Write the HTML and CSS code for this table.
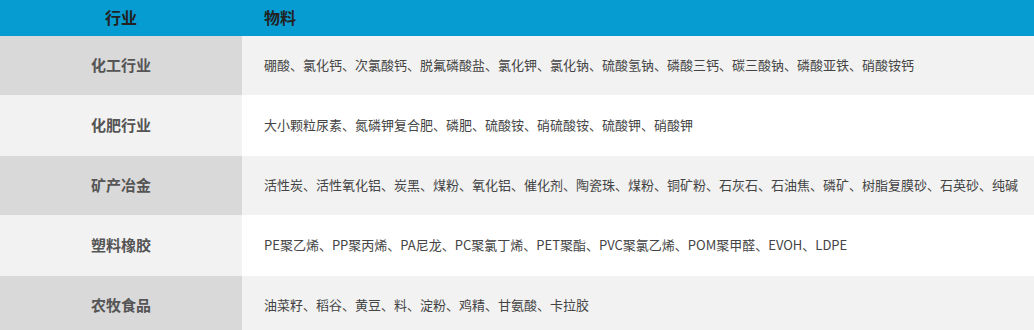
FILE: index.html
```html
<!DOCTYPE html>
<html lang="zh">
<head>
<meta charset="utf-8">
<link rel="stylesheet" href="styles.css">
</head>
<body>
<table class="tbl">
  <thead>
    <tr><th class="c1">行业</th><th class="c2">物料</th></tr>
  </thead>
  <tbody>
    <tr class="odd"><td class="c1">化工行业</td><td class="c2">硼酸、氯化钙、次氯酸钙、脱氟磷酸盐、氯化钾、氯化钠、硫酸氢钠、磷酸三钙、碳三酸钠、磷酸亚铁、硝酸铵钙</td></tr>
    <tr class="even"><td class="c1">化肥行业</td><td class="c2">大小颗粒尿素、氮磷钾复合肥、磷肥、硫酸铵、硝硫酸铵、硫酸钾、硝酸钾</td></tr>
    <tr class="odd"><td class="c1">矿产冶金</td><td class="c2">活性炭、活性氧化铝、炭黑、煤粉、氧化铝、催化剂、陶瓷珠、煤粉、铜矿粉、石灰石、石油焦、磷矿、树脂复膜砂、石英砂、纯碱</td></tr>
    <tr class="even"><td class="c1">塑料橡胶</td><td class="c2">PE聚乙烯、PP聚丙烯、PA尼龙、PC聚氯丁烯、PET聚酯、PVC聚氯乙烯、POM聚甲醛、EVOH、LDPE</td></tr>
    <tr class="odd"><td class="c1">农牧食品</td><td class="c2">油菜籽、稻谷、黄豆、料、淀粉、鸡精、甘氨酸、卡拉胶</td></tr>
  </tbody>
</table>
</body>
</html>
```

FILE: styles.css
```css
html, body {
  margin: 0;
  padding: 0;
  background: #fff;
}
body {
  font-family: "Microsoft YaHei", "Noto Sans CJK SC", "Noto Sans", sans-serif;
}
.tbl {
  width: 100%;
  border-collapse: collapse;
  border-spacing: 0;
}
.tbl th {
  height: 34px;
  padding: 0 0 2px;
  background: #069bd1;
  color: #222;
  font-size: 16px;
  font-weight: bold;
  line-height: 20px;
  vertical-align: middle;
}
.tbl th.c1 { width: 242px; text-align: center; }
.tbl th.c2 { text-align: left; padding-left: 22px; }
.tbl td {
  padding: 0 0 2px;
  line-height: 20px;
  vertical-align: middle;
}
.odd td { height: 57px; }
.even td { height: 59px; }
.tbl td.c1 {
  width: 242px;
  text-align: center;
  font-size: 15px;
  font-weight: bold;
  color: #555;
}
.tbl td.c2 {
  text-align: left;
  padding-left: 22px;
  font-size: 13px;
  color: #444;
}
.odd td.c1 { background: #d9d9d9; }
.odd td.c2 { background: #f2f2f2; }
.even td.c1 { background: #f2f2f2; }
.even td.c2 { background: #fff; }
```
